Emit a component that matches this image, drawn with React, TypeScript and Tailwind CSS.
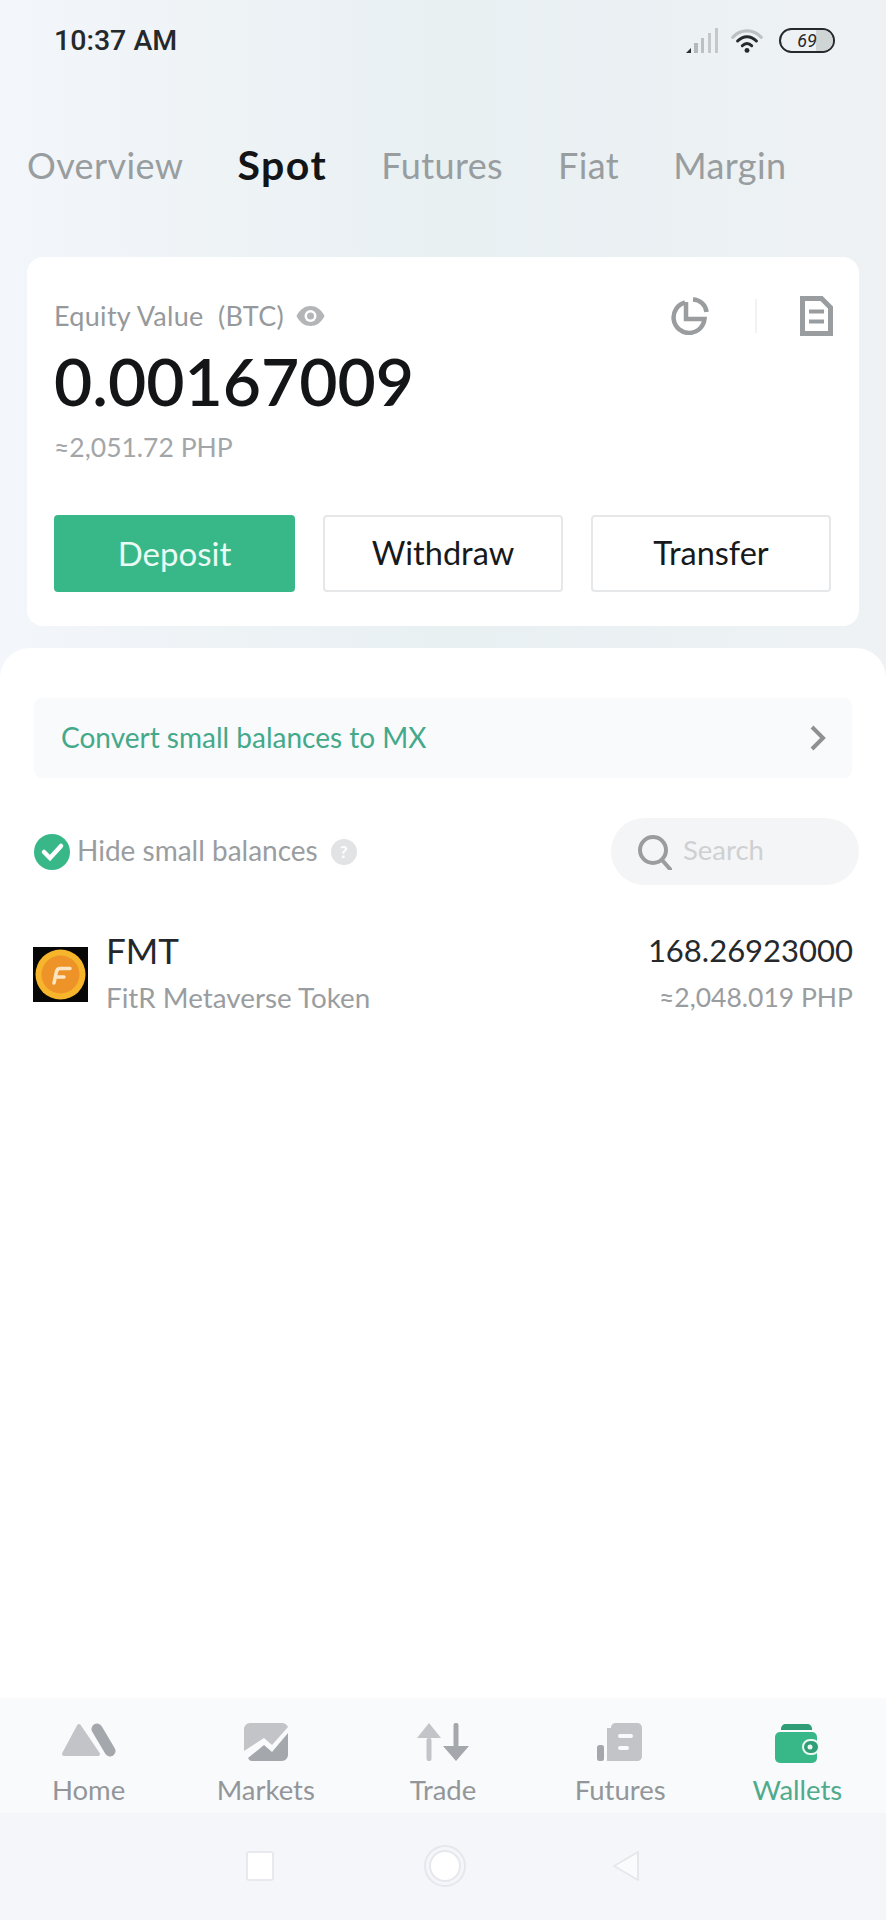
const FONT = "font-['Lato','Noto_Sans',sans-serif]";

function StatusBar() {
  return (
    <div className="h-[72px] pl-[54px] pr-[51px] pt-[25px] flex justify-between">
      <span className="font-['Roboto',sans-serif] font-medium text-[28.500px] leading-[32px] text-[#26292b]">10:37 AM</span>
      <div className="flex items-start pt-[3px]">
        <svg width="36" height="26" viewBox="0 0 36 26">
          <path d="M1 25l5-5v5z" fill="#2b2e30" />
          <rect x="9" y="15" width="4" height="10" fill="#b4b9ba" />
          <rect x="16" y="10" width="3" height="15" fill="#bcc1c2" />
          <rect x="23" y="5" width="3" height="20" fill="#c4c8c9" />
          <rect x="30" y="0" width="3" height="25" fill="#c4c8c9" />
        </svg>
        <svg width="32" height="26" viewBox="0 0 34 26" fill="none" strokeLinecap="round" className="ml-[10px]">
          <path d="M2 9C10 0 24 0 32 9" stroke="#bcc2c3" strokeWidth="3.5" />
          <path d="M7 13C13 7 21 7 27 13" stroke="#26292b" strokeWidth="3.2" />
          <path d="M12 18c3-3 7-3 10 0" stroke="#26292b" strokeWidth="3.2" />
          <circle cx="17" cy="23" r="2.6" fill="#26292b" />
        </svg>
        <div className="ml-[16px] relative w-[56px] h-[25px] rounded-full border-2 border-[#26292b] overflow-hidden flex items-center justify-center">
          <div className="absolute right-0 top-0 bottom-0 w-[17px] bg-[#cfd4d5]" />
          <span className="relative font-['Roboto',sans-serif] italic text-[18px] leading-none text-[#26292b]">69</span>
        </div>
      </div>
    </div>
  );
}

function Tabs() {
  const tabs = [
    { label: "Overview", ml: "ml-0" },
    { label: "Spot", ml: "ml-[54px]" },
    { label: "Futures", ml: "ml-[54px]" },
    { label: "Fiat", ml: "ml-[55px]" },
    { label: "Margin", ml: "ml-[54px]" },
  ];
  return (
    <div className="mt-[71px] h-[44px] pl-[27px] flex items-center">
      {tabs.map((t) => (
        <span
          key={t.label}
          className={`${t.ml} ${t.label === "Spot" ? "text-[#121416] font-bold text-[41px] tracking-[1.500px]" : "text-[#989d9f] text-[36px] tracking-[0.400px]"} leading-[44px] whitespace-nowrap`}
        >
          {t.label}
        </span>
      ))}
    </div>
  );
}

function EyeIcon() {
  return (
    <svg width="29" height="22" viewBox="0 0 29 22">
      <path d="M0.500 11C4 4 9 1 14.500 1S25 4 28.500 11C25 18 20 21 14.500 21S4 18 0.500 11z" fill="#b3b5b7" />
      <circle cx="14.500" cy="11" r="6" fill="#fff" />
      <circle cx="14.500" cy="11" r="3.500" fill="#b3b5b7" />
    </svg>
  );
}

function PieIcon() {
  return (
    <svg width="38" height="38" viewBox="0 0 38 38" fill="none" stroke="#9a9d9f" strokeWidth="4.500">
      <path d="M14 5.500A15.500 15.500 0 1 0 33.500 22H15V5" />
      <path d="M22 2.500A14 14 0 0 1 35.500 15" />
    </svg>
  );
}

function DocIcon() {
  return (
    <svg width="33" height="40" viewBox="0 0 33 40" fill="none" stroke="#9a9d9f">
      <path d="M2.500 2.500h19l9 9v26h-28z" strokeWidth="5" />
      <path d="M9 15.500h15M9 25.500h15" strokeWidth="4" />
    </svg>
  );
}

function EquityCard() {
  return (
    <div className="mt-[70px] mx-[27px] h-[369px] rounded-[16px] bg-white px-[27px] pt-[44px]">
      <div className="flex justify-between h-[42px]">
        <div className="flex items-center gap-[12px] h-[30px]">
          <span className="text-[27px] leading-[30px] text-[#96999c] tracking-[0.300px]">Equity Value&nbsp;&nbsp;(BTC)</span>
          <EyeIcon />
        </div>
        <div className="flex items-center h-[40px] -mt-[5px] mr-[-1px]">
          <PieIcon />
          <div className="w-[2px] h-[34px] bg-[#f1f2f3] ml-[46px] mr-[43px]" />
          <DocIcon />
        </div>
      </div>
      <div className="text-[66px] leading-[70px] font-semibold text-[#131517] mt-[3px]">0.00167009</div>
      <div className="mt-[16px] text-[26.500px] leading-[30px] text-[#a3a6a8]">≈2,051.72 PHP</div>
      <div className="mt-[53px] flex gap-[28px]">
        <button className="w-[241px] h-[77px] rounded-[4px] bg-[#38b888] text-[#e9fbf4] text-[33px]">Deposit</button>
        <button className="w-[240px] h-[77px] rounded-[4px] border-2 border-[#e6e7e9] text-[#17191b] text-[32.500px]">Withdraw</button>
        <button className="w-[240px] h-[77px] rounded-[4px] border-2 border-[#e6e7e9] text-[#17191b] text-[32.500px]">Transfer</button>
      </div>
    </div>
  );
}

function TokenLogo() {
  return (
    <svg width="55" height="55" viewBox="0 0 55 55" className="shrink-0">
      <rect width="55" height="55" fill="#070707" />
      <circle cx="27.500" cy="27.500" r="25" fill="#f7b52b" />
      <circle cx="27.500" cy="27.500" r="19" fill="#ee9328" />
      <path d="M37 21.500H27c-2 0-3 1-3.500 3L21 36M22.500 30H31" fill="none" stroke="#fbe6c4" strokeWidth="3.500" strokeLinecap="round" />
    </svg>
  );
}

function NavIcon({ name }: { name: string }) {
  if (name === "Home") {
    return (
      <svg width="56" height="34" viewBox="0 0 56 34">
        <path d="M18 3L37 31H3z" fill="#c2c4c7" stroke="#c2c4c7" strokeWidth="4" strokeLinejoin="round" />
        <path d="M36 6l13 22" stroke="#a4a7ab" strokeWidth="11" strokeLinecap="round" />
      </svg>
    );
  }
  if (name === "Markets") {
    return (
      <svg width="44" height="38" viewBox="0 0 44 38">
        <path d="M6 0h32c3 0 5 2 6 4L28 22l-8-7L0 28V6c0-3 3-6 6-6z" fill="#c2c4c7" />
        <path d="M44 10v22c0 3-3 6-6 6H8c-2 0-3-1-4-3l16-13 8 7z" fill="#a4a7ab" />
      </svg>
    );
  }
  if (name === "Trade") {
    return (
      <svg width="52" height="38" viewBox="0 0 52 38">
        <path d="M12 0l12 15H0z" fill="#c2c4c7" />
        <rect x="9.500" y="15" width="5" height="23" rx="2" fill="#c2c4c7" />
        <rect x="36.500" y="0" width="5" height="24" rx="2" fill="#a4a7ab" />
        <path d="M26 23h26L39 38z" fill="#a4a7ab" />
      </svg>
    );
  }
  if (name === "Futures") {
    return (
      <svg width="46" height="38" viewBox="0 0 46 38">
        <rect x="0" y="22" width="7" height="16" rx="2.500" fill="#a4a7ab" />
        <path d="M14 5c0-3 2-5 5-5h21c3 0 5 2 5 5v28c0 3-2 5-5 5H10V5z" fill="#c2c4c7" />
        <rect x="21" y="11" width="15" height="4" rx="2" fill="#f9fafc" />
        <rect x="21" y="23" width="11" height="4" rx="2" fill="#f9fafc" />
      </svg>
    );
  }
  return (
    <svg width="44" height="40" viewBox="0 0 44 40">
      <path d="M6 6c0-3 2-5 5-5h21c3 0 5 2 5 5v1H6z" fill="#2f9e76" />
      <rect x="0" y="9" width="42" height="31" rx="5" fill="#38b888" />
      <rect x="28" y="17" width="16" height="14" rx="7" fill="#2f9e76" stroke="#eaf7f2" strokeWidth="2" />
      <circle cx="35" cy="24" r="2.500" fill="#eaf7f2" />
    </svg>
  );
}

function BottomNav() {
  const items = ["Home", "Markets", "Trade", "Futures", "Wallets"];
  return (
    <div className="h-[115px] bg-[#f9fafc] grid grid-cols-5">
      {items.map((name) => (
        <div key={name} className="flex flex-col items-center">
          <div className="h-[64px] pt-[25px] flex items-start justify-center">
            <NavIcon name={name} />
          </div>
          <span className={`text-[27.500px] leading-[30px] mt-[13px] ${name === "Wallets" ? "text-[#4fab8c]" : "text-[#939699]"}`}>{name}</span>
        </div>
      ))}
    </div>
  );
}

export default function App() {
  return (
    <div className={`${FONT} w-[886px] h-[1920px] flex flex-col overflow-hidden bg-gradient-to-r from-[#f3f6fa] via-[#e9f0f2] to-[#eef2f5]`}>
      <StatusBar />
      <Tabs />
      <EquityCard />

      {/* sheet */}
      <div className="mt-[22px] flex-1 rounded-t-[30px] bg-white px-[34px] pt-[50px]">
        <div className="h-[80px] rounded-[8px] bg-[#f9fafc] pl-[27px] pr-[26px] flex items-center justify-between">
          <span className="text-[#43a98a] text-[28px] -mt-[2px]">Convert small balances to MX</span>
          <svg width="16" height="26" viewBox="0 0 16 26" fill="none" stroke="#8e9194" strokeWidth="4">
            <path d="M2 2l11 11L2 24" />
          </svg>
        </div>
        <div className="mt-[40px] -mr-[7px] flex items-center justify-between">
          <div className="flex items-center">
            <svg width="36" height="36" viewBox="0 0 36 36">
              <circle cx="18" cy="18" r="18" fill="#38b888" />
              <path d="M10 18l6 6 11-12" fill="none" stroke="#fff" strokeWidth="4.500" strokeLinecap="round" />
            </svg>
            <span className="ml-[7px] text-[28px] text-[#9a9da0] -mt-[3px]">Hide small balances</span>
            <div className="ml-[13px] w-[26px] h-[26px] rounded-full bg-[#e2e3e5] text-white text-[17px] font-bold flex items-center justify-center">?</div>
          </div>
          <div className="w-[248px] h-[67px] rounded-full bg-[#f4f5f7] pl-[26px] flex items-center">
            <svg width="36" height="36" viewBox="0 0 36 36" fill="none" stroke="#9a9d9f" strokeWidth="4">
              <circle cx="16" cy="16" r="13" />
              <path d="M25 26l8 9" strokeLinecap="round" />
            </svg>
            <span className="ml-[10px] text-[27.500px] text-[#ced0d2] -mt-[3px]">Search</span>
          </div>
        </div>
        <div className="mt-[41px] flex">
          <div className="mt-[21px] -ml-[1px]">
            <TokenLogo />
          </div>
          <div className="ml-[18px] flex-1 -mr-[1px]">
            <div className="flex justify-between items-center h-[52px] -mt-[2px]">
              <span className="text-[35px] text-[#24272a]">FMT</span>
              <span className="text-[31px] text-[#26292c]">168.26923000</span>
            </div>
            <div className="flex justify-between items-center h-[40px] mt-[2px]">
              <span className="text-[27.800px] text-[#9a9da0]">FitR Metaverse Token</span>
              <span className="text-[26.500px] text-[#9a9da0]">≈2,048.019 PHP</span>
            </div>
          </div>
        </div>
      </div>

      <BottomNav />

      {/* android nav */}
      <div className="h-[107px] bg-[#f5f6f9] flex items-center justify-center pb-[2px]">
        <div className="w-[28px] h-[30px] rounded-[3px] border-2 border-[#e8e9ee] bg-white" />
        <div className="ml-[150px] w-[42px] h-[42px] rounded-full border-2 border-[#e6e7ec] flex items-center justify-center">
          <div className="w-[32px] h-[32px] rounded-full border-2 border-[#e6e7ec] bg-white" />
        </div>
        <svg width="30" height="32" viewBox="0 0 30 32" className="ml-[145px]">
          <path d="M27 2v28L3 16z" fill="#fafbfd" stroke="#e6e7ec" strokeWidth="2" strokeLinejoin="round" />
        </svg>
      </div>
    </div>
  );
}
